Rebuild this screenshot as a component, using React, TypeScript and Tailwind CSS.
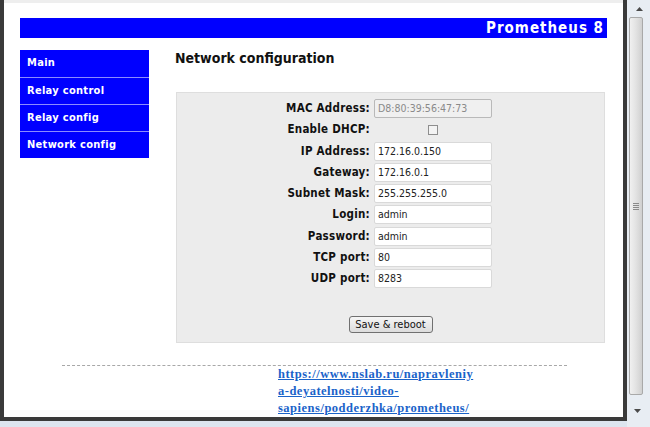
import React from "react";

const SANS = { fontFamily: '"DejaVu Sans Condensed", "DejaVu Sans", Verdana, sans-serif' };

function Row({ label, children }: { label: string; children: React.ReactNode }) {
  return (
    <div className="flex h-[21.25px] items-center">
      <div className="w-[197px] pr-[4px] text-right text-[11.5px] tracking-[0.25px] font-bold text-[#111]">{label}</div>
      <div className="w-[118px] h-[19px] flex items-center">{children}</div>
    </div>
  );
}

function Field({ value, disabled }: { value: string; disabled?: boolean }) {
  return (
    <div
      className={
        disabled
          ? "w-[118px] h-[19px] border border-[#b9b9b9] rounded-[2px] bg-[#f0f0f0] text-[#8a8a8a] text-[10.5px] leading-[17px] pl-[3px]"
          : "w-[118px] h-[19px] border border-[#d9d9d9] rounded-[2px] bg-white text-[#222] text-[10.5px] leading-[17px] pl-[3px]"
      }
    >
      {value}
    </div>
  );
}

export default function App() {
  const menu = ["Main", "Relay control", "Relay config", "Network config"];
  return (
    <div className="w-[650px] h-[427px] flex bg-[#dde5ef] overflow-hidden" style={SANS}>
      <div className="w-[627px] h-[421px] border-l-[4px] border-r-[4px] border-b-[4px] border-[#3a3a3a] bg-white flex flex-col">
        <div className="h-[3px] bg-[#eeeeee]" />
        <div className="px-[16px]">
          <div className="mt-[15px] h-[20px] bg-[#0000ff] flex items-center justify-end pr-[3px] text-white font-bold text-[15px] tracking-[1px] leading-[20px]">
            Prometheus 8
          </div>
          <div className="mt-[12px] flex">
            <div className="w-[129px] flex flex-col">
              {menu.map((m, i) => (
                <div
                  key={m}
                  className={
                    i === 0
                      ? "h-[27px] bg-[#0000ff] text-white font-bold text-[11px] tracking-[0.3px] flex items-center pl-[7px]"
                      : "h-[27px] bg-[#0000ff] border-t border-[#8c8cff] text-white font-bold text-[11px] tracking-[0.3px] flex items-center pl-[7px]"
                  }
                >
                  {m}
                </div>
              ))}
            </div>
            <div className="ml-[26px] w-[430px] flex flex-col">
              <div className="h-[16px] leading-[16px] text-[14px] font-bold text-[#111]">Network configuration</div>
              <div className="mt-[26px] ml-[1px] w-[429px] h-[251px] bg-[#ececec] border border-[#dedede] pt-[5px] flex flex-col">
                <Row label="MAC Address:">
                  <Field value="D8:80:39:56:47:73" disabled />
                </Row>
                <Row label="Enable DHCP:">
                  <div className="w-full flex justify-center">
                    <div className="w-[10px] h-[10px] border border-[#8e8e8e] bg-[#f3f3f3]" />
                  </div>
                </Row>
                <Row label="IP Address:">
                  <Field value="172.16.0.150" />
                </Row>
                <Row label="Gateway:">
                  <Field value="172.16.0.1" />
                </Row>
                <Row label="Subnet Mask:">
                  <Field value="255.255.255.0" />
                </Row>
                <Row label="Login:">
                  <Field value="admin" />
                </Row>
                <Row label="Password:">
                  <Field value="admin" />
                </Row>
                <Row label="TCP port:">
                  <Field value="80" />
                </Row>
                <Row label="UDP port:">
                  <Field value="8283" />
                </Row>
                <div className="mt-[27px] flex justify-center">
                  <div className="w-[84px] h-[17px] rounded-[3px] border border-[#707070] bg-gradient-to-b from-[#f6f6f6] to-[#dcdcdc] text-[11px] leading-[15px] text-center text-[#111]">
                    Save &amp; reboot
                  </div>
                </div>
              </div>
            </div>
          </div>
          <div className="mt-[22px] ml-[42px] w-[505px] border-t border-dashed border-[#a8a8a8]" />
          <div className="ml-[258px] w-[240px]">
            <a
              href="#"
              className="block text-[12.5px] tracking-[0.5px] leading-[17px] font-bold underline text-[#1a63c9]"
              style={{ fontFamily: '"Liberation Serif", "Times New Roman", serif' }}
            >
              https://www.nslab.ru/napravleniy
              <br />
              a-deyatelnosti/video-
              <br />
              sapiens/podderzhka/prometheus/
            </a>
          </div>
        </div>
      </div>
      <div className="w-[23px] h-[427px] flex flex-col bg-[#e8edf3]">
        <div className="h-[17px] flex items-center justify-center pl-[1px]">
          <svg width="7" height="4" viewBox="0 0 7 4">
            <path d="M0 4 L3.5 0 L7 4 Z" fill="#4a4a4a" />
          </svg>
        </div>
        <div className="h-[378px] ml-[2px] w-[14px] rounded-[2px] border border-[#a9a9a9] bg-gradient-to-r from-[#f0f0f0] via-[#e2e2e2] to-[#d0d0d0] flex items-center justify-center">
          <div className="flex flex-col gap-[1px]">
            <div className="w-[6px] h-[1px] bg-[#8a8a8a]" />
            <div className="w-[6px] h-[1px] bg-[#8a8a8a]" />
            <div className="w-[6px] h-[1px] bg-[#8a8a8a]" />
            <div className="w-[6px] h-[1px] bg-[#8a8a8a]" />
          </div>
        </div>
        <div className="flex-1 flex items-center justify-center pr-[3px]">
          <svg width="7" height="4" viewBox="0 0 7 4">
            <path d="M0 0 L3.5 4 L7 0 Z" fill="#4a4a4a" />
          </svg>
        </div>
      </div>
    </div>
  );
}
